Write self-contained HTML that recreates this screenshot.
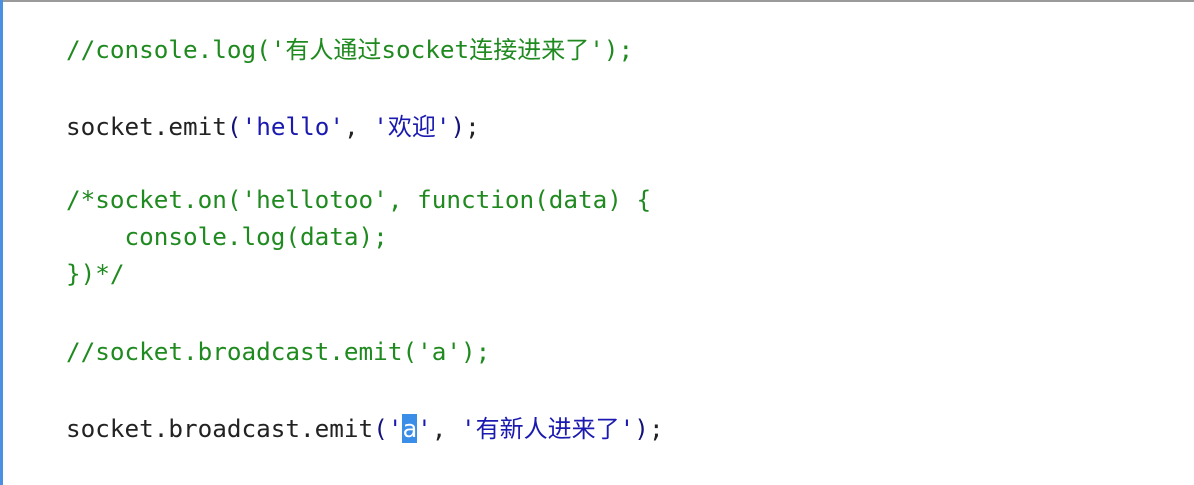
<!DOCTYPE html>
<html><head><meta charset="utf-8"><style>
body{margin:0;width:1194px;height:485px;background:#fff;overflow:hidden;position:relative;font-family:"DejaVu Sans Mono","Noto Sans CJK SC",monospace;font-size:24.3px}
.top{position:absolute;left:0;top:0;width:1194px;height:2px;background:#9a9a9a}
.left{position:absolute;left:0;top:0;width:3px;height:485px;background:#4a90e2}
.l{position:absolute;left:66px;white-space:pre;line-height:36px;color:#222}
.g{color:#1f8a1f}.b{color:#1a1ab0}.p{color:#12127a}
.cj{font-family:"Noto Sans CJK SC",sans-serif;font-size:24px}
.hl{background:#3b8ee8;color:#fff}
</style></head><body>
<div class="top"></div><div class="left"></div>
<div class="l g" style="top:30px">//console.log('<span class="cj">有人通过</span>socket<span class="cj">连接进来了</span>');</div>
<div class="l" style="top:107px">socket.emit<span class="p">(</span><span class="b">'hello'</span>, <span class="b">'<span class="cj">欢迎</span>'</span><span class="p">)</span>;</div>
<div class="l g" style="top:182px">/*socket.on('hellotoo', function(data) {</div>
<div class="l g" style="top:219px">    console.log(data);</div>
<div class="l g" style="top:256px">})*/</div>
<div class="l g" style="top:334px">//socket.broadcast.emit('a');</div>
<div class="l" style="top:409px">socket.broadcast.emit<span class="p">(</span><span class="b">'<span class="hl">a</span>'</span>, <span class="b">'<span class="cj">有新人进来了</span>'</span><span class="p">)</span>;</div>
</body></html>
